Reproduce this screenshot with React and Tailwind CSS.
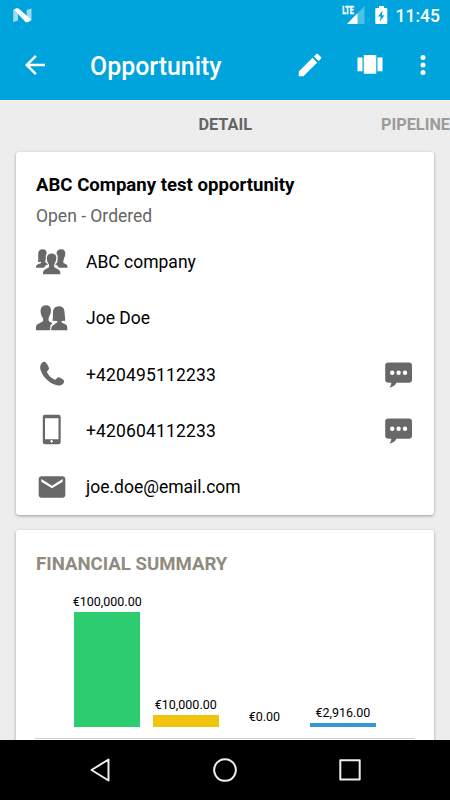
const HeadBack = () => (
  <svg width="32" height="26" viewBox="0 0 32 26" fill="#686868">
    <path d="M6.200.3C9 .1 10.700 1.700 10.700 4.300 9.700 5.800 9.500 7.600 9.900 9.400L9.300 11.600 9.500 13.600 12.200 15.200C10.300 16 8.800 16.800 7.900 18.700H0C.1 16.600.6 15.800 2.100 15.300L5 14 5.300 12.800 1.900 12.900C2.700 10.800 1.800 5.400 2.400 3.400 3 1.500 4.300.4 6.200.3Z" />
    <path d="M25 .3C28 .1 29.500 2 29.300 5.200 29.200 7.200 28 8.600 27.900 10.200L27.200 12.600 27.500 14 30 15.300C31.300 15.900 31.500 17 31.500 18.700H22.900C22 16.900 20.700 16.100 18.800 15.300L21.300 13.700 21.400 11.600C22 9 22 6.500 20.500 4.500 20.600 2 22.300.4 25 .3Z" />
    <path d="M15.400 4.400C18.700 4.200 20.600 6.300 20.300 9.500 20.100 11.900 19 13.500 18.200 15.400L18.300 18.300 22.700 20.700C24 21.500 24.400 23.200 24.400 25.300H7C7 23.200 7.300 21.400 8.700 20.700L13 18.300 13 15.400C11.600 13.800 10.800 11.600 10.900 8.700 11 6 12.800 4.500 15.400 4.400Z" stroke="#fff" strokeWidth="1" paintOrder="stroke" />
  </svg>
);

const PairIcon = () => (
  <svg width="32" height="26" viewBox="0 0 32 26" fill="#686868">
    <path d="M10 .3C13.500.1 15.200 2.600 14.900 5.900 14.900 8 14.300 9.300 13.500 10.700L12.500 13.500 12.700 16.100C14.100 17.100 15.800 17.400 16.300 18.600 15.100 19.300 14.200 20.600 13.800 22L14.600 20.800 14 25.200H0V22C.2 20.200 1 19.600 2.500 18.800L7.100 16.300 7.200 13.500C6 11.800 4.800 9.900 4.700 7.300 4.200 3.200 5.800.5 10 .3Z" />
    <path d="M21.700 1.400C26 .9 28.400 3.100 28.500 7L29.300 15.800 25.500 15.900 25.600 17.500 29.200 19.300C30.900 20 31.300 21 31.400 25.200H15.200C15.200 22 15.900 20.900 17.500 20L21.300 17.300V15.900L16.400 15.800C17.500 12.500 16.500 8 17.300 5 18 2.800 19.500 1.600 21.700 1.400Z" />
  </svg>
);

const PhoneIcon = () => (
  <svg width="32" height="32" viewBox="0 0 24 24" fill="#686868">
    <path d="M6.600 2.900C7.800 3.800 9 5.600 9.800 7.600 10.100 8.700 8 9.500 8.200 10.500 9.500 13.300 11.400 15.100 14.100 16.300 15 16.600 15.700 14.300 16.800 14.400 18.500 14.900 20 15.800 21 16.900 21.400 17.700 20.600 19.100 19.900 19.700 18.300 21.200 14.700 20.700 12 19.200 8 16.900 4.600 13 3.300 8.700 2.700 5.700 4 3.400 5.800 2.800 6.100 2.700 6.400 2.700 6.600 2.900Z" />
  </svg>
);

const MobileIcon = () => (
  <svg width="32" height="32" viewBox="0 0 32 32">
    <path fill="#686868" fillRule="evenodd" d="M9 .8H22.500A2.200 2.200 0 0 1 24.700 3V28A2.200 2.200 0 0 1 22.500 30.200H9A2.200 2.200 0 0 1 6.800 28V3A2.200 2.200 0 0 1 9 .8ZM9 4.200V25.300H22.500V4.200Z" />
    <path d="M14.300 27.300H16.900M15.600 26V28.600" stroke="#fff" strokeWidth="1.200" />
  </svg>
);

const MailIcon = () => (
  <svg width="32" height="32" viewBox="0 0 24 24" fill="#686868">
    <path d="M20 4H4c-1.100 0-1.990.9-1.990 2L2 18c0 1.100.9 2 2 2h16c1.100 0 2-.9 2-2V6c0-1.100-.9-2-2-2zm0 4-8 5-8-5V6l8 5 8-5v2z" />
  </svg>
);

const ChatIcon = () => (
  <svg width="28" height="27" viewBox="0 0 28 27">
    <path fill="#686868" d="M3.500.5H23.700A3.300 3.300 0 0 1 27 3.800V17.500A3.300 3.300 0 0 1 23.700 20.800H11.500C10 23.500 7.800 25.500 4.200 25.500 5.600 24.400 6.200 22.800 6.300 20.800H3.500A3.300 3.300 0 0 1 .2 17.500V3.800A3.300 3.300 0 0 1 3.500.5Z" />
    <g fill="#fff">
      <circle cx="7.200" cy="10.800" r="2.200" />
      <circle cx="13.600" cy="10.800" r="2.200" />
      <circle cx="20" cy="10.800" r="2.200" />
    </g>
  </svg>
);

const contacts = [
  { icon: HeadBack, text: 'ABC company' },
  { icon: PairIcon, text: 'Joe Doe' },
  { icon: PhoneIcon, text: '+420495112233', chat: true },
  { icon: MobileIcon, text: '+420604112233', chat: true },
  { icon: MailIcon, text: 'joe.doe@email.com' },
];

const bars = [
  { label: '€100,000.00', height: 114.5, color: 'bg-[#2ecc71]' },
  { label: '€10,000.00', height: 11.5, color: 'bg-[#f1c40f]' },
  { label: '€0.00', height: 0, color: 'bg-transparent' },
  { label: '€2,916.00', height: 3.5, color: 'bg-[#3498db]' },
];

function StatusBar() {
  return (
    <div className="flex h-[30px] items-center justify-between pr-[10px] pl-[13px]">
      <svg width="19" height="15" viewBox="0 0 19 15">
        <path d="M.2 2 5 .5V12.500L.2 14ZM13.700 2 18.500.5V12.500L13.700 14.200Z" fill="#9cdcf2" />
        <path d="M1 1.500Q4.500-.6 6.500 1.200L18 11.500Q15.500 15 12.500 14Z" fill="#fff" />
      </svg>
      <div className="flex items-center">
        <svg width="24" height="20" viewBox="0 0 24 20">
          <path d="M22.500 1V19H5Z" fill="#4dc0e6" />
          <path d="M15.500 8.200V19H5Z" fill="#fff" />
          <path d="M0 0H12.500V9.800H0Z" fill="#00a4dd" />
          <text x="0.200" y="9" fill="#fff" stroke="#fff" strokeWidth="0.400" fontSize="10.500" fontWeight="700" textLength="11.500" lengthAdjust="spacingAndGlyphs">LTE</text>
        </svg>
        <svg width="13" height="18" viewBox="0 0 13 18" className="ml-[8.500px]">
          <path d="M4 0H9V2H11.300Q12.300 2 12.300 3V17Q12.300 18 11.300 18H1.300Q.3 18 .3 17V3Q.3 2 1.300 2H4Z" fill="#fff" />
          <path d="M7.500 4.500 3 10.600H5.700L5 15.500 9.500 9.200H6.800Z" fill="#00a4dd" />
        </svg>
        <span className="ml-[8px] pt-[2px] text-[17.500px] leading-[20px] font-medium">11:45</span>
      </div>
    </div>
  );
}

function AppBar() {
  return (
    <div className="flex h-[70px] items-center pl-[20px]">
      <svg width="30" height="30" viewBox="0 0 24 24" fill="currentColor">
        <path d="M20 11H7.830l5.590-5.590L12 4l-8 8 8 8 1.410-1.410L7.830 13H20v-2z" />
      </svg>
      <h1 className="ml-[40px] pt-[3px] text-[24.900px] font-medium">Opportunity</h1>
      <svg width="30" height="30" viewBox="0 0 24 24" fill="currentColor" className="mr-[30px] ml-auto">
        <path d="M3 17.250V21h3.750L17.810 9.940l-3.750-3.750L3 17.250zM20.710 7.040a1 1 0 0 0 0-1.410l-2.340-2.340a1 1 0 0 0-1.410 0l-1.830 1.830 3.750 3.750 1.830-1.830z" />
      </svg>
      <svg width="30" height="30" viewBox="0 0 24 24" fill="currentColor" className="mr-[22.500px]">
        <path d="M7 19h10V4H7v15zm-5-2h4V6H2v11zM18 6v11h4V6h-4z" />
      </svg>
      <svg width="30" height="30" viewBox="0 0 24 24" fill="currentColor" className="mr-[12.500px]">
        <circle cx="12" cy="6" r="2" />
        <circle cx="12" cy="12" r="2" />
        <circle cx="12" cy="18" r="2" />
      </svg>
    </div>
  );
}

export default function App() {
  return (
    <div className="flex h-[800px] w-[450px] flex-col overflow-hidden bg-[#ededed] font-['Roboto',sans-serif] text-black">
      <header className="shrink-0 bg-[#00a4dd] text-white">
        <StatusBar />
        <AppBar />
      </header>
      <main className="flex min-h-0 flex-1 flex-col overflow-hidden border-t border-[#fdefe8]">
        <nav className="flex h-[51px] shrink-0 items-center overflow-hidden pb-[2px] text-[16.250px] font-bold whitespace-nowrap">
          <span className="ml-[198.500px] w-[182.500px] text-[#656565]">DETAIL</span>
          <span className="text-[#9b9b9b]">PIPELINE</span>
        </nav>
        <section className="mx-[16px] h-[363px] shrink-0 rounded-[3px] bg-white px-[20px] pt-[20px] shadow-[0_1px_3px_rgba(0,0,0,0.350)]">
          <h2 className="text-[18.600px] leading-[26px] font-bold">ABC Company test opportunity</h2>
          <p className="mt-[4px] h-[32px] text-[17.500px] leading-[28px] text-[#656565]">Open - Ordered</p>
          <ul>
            {contacts.map(({ icon: Icon, text, chat }) => (
              <li key={text} className="flex h-[56.250px] items-center text-[17.500px]">
                <span className="flex w-[50px] pb-px">
                  <Icon />
                </span>
                <span className={chat ? 'tracking-[0.150px]' : ''}>{text}</span>
                {chat && (
                  <span className="mr-[1px] ml-auto pt-[2px]">
                    <ChatIcon />
                  </span>
                )}
              </li>
            ))}
          </ul>
        </section>
        <section className="mx-[16px] mt-[15px] h-[240px] shrink-0 rounded-[3px] bg-white px-[20px] pt-[21px] shadow-[0_1px_3px_rgba(0,0,0,0.350)]">
          <h2 className="text-[18.600px] leading-[27px] font-bold text-[#918a7e]">FINANCIAL SUMMARY</h2>
          <div className="-mx-px flex h-[161px] items-end gap-[12.200px] border-b border-[#cfcfcf] pb-[11.500px] pl-[39px]">
            {bars.map(({ label, height, color }) => (
              <div key={label} className="flex w-[66.400px] flex-col items-center">
                <span className="pb-[3px] text-[12.500px] leading-[15px] whitespace-nowrap">{label}</span>
                <div className={`w-full ${color}`} style={{ height }} />
              </div>
            ))}
          </div>
        </section>
      </main>
      <footer className="flex h-[60px] shrink-0 items-center justify-center gap-[101px] bg-black">
        {['M20.500 3.500V24.500L3.500 14Z', 'M12 3.200a10.800 10.800 0 1 0 .01 0Z', 'M2.300 4.200H21.700V23.600H2.300Z'].map((d) => (
          <svg key={d} width="24" height="28" viewBox="0 0 24 28" fill="none" stroke="#eee" strokeWidth="2" strokeLinejoin="round">
            <path d={d} />
          </svg>
        ))}
      </footer>
    </div>
  );
}
